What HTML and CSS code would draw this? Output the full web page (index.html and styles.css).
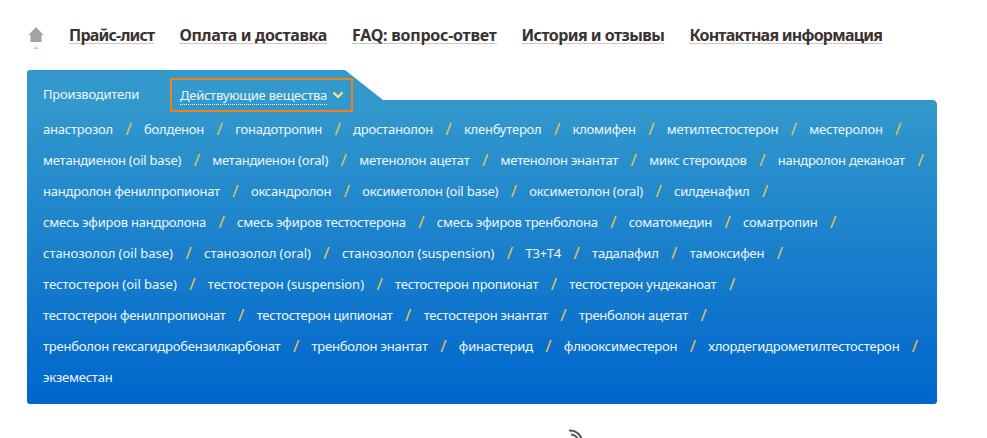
FILE: index.html
```html
<!DOCTYPE html>
<html lang="ru">
<head>
<meta charset="utf-8">
<title>Действующие вещества</title>
<link rel="stylesheet" href="styles.css">
</head>
<body>
<div class="page">
  <nav class="nav">
    <a class="home" href="#" aria-label="Главная">
      <svg class="home-icon" width="16" height="22" viewBox="0 0 16 22"><path d="M8 0 15.500 8H13.500V15H2.500V8H.5Z" fill="#a3a3a3"/><path d="M8 19 10.500 22H5.500Z" fill="#fbc77e"/></svg>
    </a>
    <a class="nav-link nav-price" href="#">Прайс-лист</a>
    <a class="nav-link nav-pay" href="#">Оплата и доставка</a>
    <a class="nav-link nav-faq" href="#">FAQ: вопрос-ответ</a>
    <a class="nav-link nav-hist" href="#">История и отзывы</a>
    <a class="nav-link nav-cont" href="#">Контактная информация</a>
  </nav>
  <section class="panel">
    <div class="tabs">
      <span class="tab">Производители</span>
      <span class="tab-active"><span class="tab-label">Действующие вещества</span>
        <svg width="12" height="8" viewBox="0 0 12 8"><path d="M1.500 1.500 6 6 10.500 1.500" fill="none" stroke="#f6ea8c" stroke-width="2.200"/></svg>
      </span>
    </div>
    <div class="links">
      <div class="row"><a>анастрозол</a><i>/</i><a>болденон</a><i>/</i><a>гонадотропин</a><i>/</i><a>дростанолон</a><i>/</i><a>кленбутерол</a><i>/</i><a>кломифен</a><i>/</i><a>метилтестостерон</a><i>/</i><a>местеролон</a><i>/</i></div>
      <div class="row"><a>метандиенон (oil base)</a><i>/</i><a>метандиенон (oral)</a><i>/</i><a>метенолон ацетат</a><i>/</i><a>метенолон энантат</a><i>/</i><a>микс стероидов</a><i>/</i><a>нандролон деканоат</a><i>/</i></div>
      <div class="row"><a>нандролон фенилпропионат</a><i>/</i><a>оксандролон</a><i>/</i><a>оксиметолон (oil base)</a><i>/</i><a>оксиметолон (oral)</a><i>/</i><a>силденафил</a><i>/</i></div>
      <div class="row"><a>смесь эфиров нандролона</a><i>/</i><a>смесь эфиров тестостерона</a><i>/</i><a>смесь эфиров тренболона</a><i>/</i><a>соматомедин</a><i>/</i><a>соматропин</a><i>/</i></div>
      <div class="row"><a class="loose">станозолол (oil base)</a><i>/</i><a class="loose">станозолол (oral)</a><i>/</i><a class="loose">станозолол (suspension)</a><i>/</i><a>Т3+Т4</a><i>/</i><a>тадалафил</a><i>/</i><a>тамоксифен</a><i>/</i></div>
      <div class="row"><a class="loose">тестостерон (oil base)</a><i>/</i><a class="loose">тестостерон (suspension)</a><i>/</i><a>тестостерон пропионат</a><i>/</i><a>тестостерон ундеканоат</a><i>/</i></div>
      <div class="row"><a>тестостерон фенилпропионат</a><i>/</i><a>тестостерон ципионат</a><i>/</i><a>тестостерон энантат</a><i>/</i><a>тренболон ацетат</a><i>/</i></div>
      <div class="row"><a>тренболон гексагидробензилкарбонат</a><i>/</i><a>тренболон энантат</a><i>/</i><a>финастерид</a><i>/</i><a>флюоксиместерон</a><i>/</i><a>хлордегидрометилтестостерон</a><i>/</i></div>
      <div class="row"><a>экземестан</a></div>
    </div>
  </section>
  <div class="rss-row">
    <svg width="20" height="10" viewBox="0 0 20 10"><path d="M5 6.500A7 7 0 0 1 12 13M3 2.500A12 12 0 0 1 16 13" fill="none" stroke="#555" stroke-width="2"/></svg>
  </div>
</div>
</body>
</html>
```
FILE: styles.css
```css
* { box-sizing: border-box; }
html, body { margin: 0; padding: 0; background: #fff; }
body { height: 438px; overflow: hidden; font-family: "Noto Sans", "Open Sans", sans-serif; }
.page { width: 987px; padding: 0 0 0 27px; }
.nav { display: flex; align-items: flex-start; height: 70px; padding-top: 27px; }
.home { display: block; width: 42px; height: 24px; padding-left: 1px; }
.home-icon { display: block; }
.nav-link { font-size: 16px; font-weight: 700; color: #3a3230; line-height: 16px; border-bottom: 1px solid #c9c9c9; margin-right: 25px; text-decoration: none; white-space: nowrap; }
.nav-price { letter-spacing: -0.8px; }
.nav-pay { letter-spacing: -0.36px; }
.nav-faq { letter-spacing: -0.24px; }
.nav-hist { letter-spacing: -0.54px; }
.nav-cont { letter-spacing: -0.76px; }
.panel { width: 910px; position: relative; height: 334px; background: linear-gradient(#3399cc 0, #3399cc 30px, #0066cc 100%); border-radius: 3px; }
.panel::after { content: ""; position: absolute; left: 318px; top: 0; width: 592px; height: 30px; background: #fff; clip-path: polygon(0 0, 100% 0, 100% 100%, 38px 100%); }
.panel::before { content: ""; position: absolute; right: 0; top: 30px; width: 4px; height: 4px; z-index: 2; background: radial-gradient(circle at 0 100%, transparent 3.500px, #fff 4px); }
.tabs { position: relative; z-index: 1; display: flex; align-items: flex-start; height: 30px; padding: 8px 0 0 16px; font-size: 13px; color: #eef7fd; letter-spacing: -0.25px; }
.tab { width: 127px; line-height: 32px; white-space: nowrap; }
.tab-active { display: flex; align-items: center; gap: 5px; height: 34px; width: 183px; padding: 0 0 0 8px; border: 2px solid #f47f16; white-space: nowrap; }
.tab-label { border-bottom: 1px dotted #fff; line-height: 17px; margin-top: 1px; }
.links { position: relative; z-index: 1; padding: 13px 0 0 16px; }
.row { display: flex; height: 31px; align-items: center; font-size: 13px; color: #eef7fd; letter-spacing: -0.22px; white-space: nowrap; }
.row .loose { letter-spacing: -0.02px; }
.row i { font-style: normal; color: #eac24e; width: 31px; text-align: center; font-size: 17px; line-height: 20px; }
.rss-row { padding: 24px 0 0 539px; height: 34px; }
.rss-row svg { display: block; }
```
